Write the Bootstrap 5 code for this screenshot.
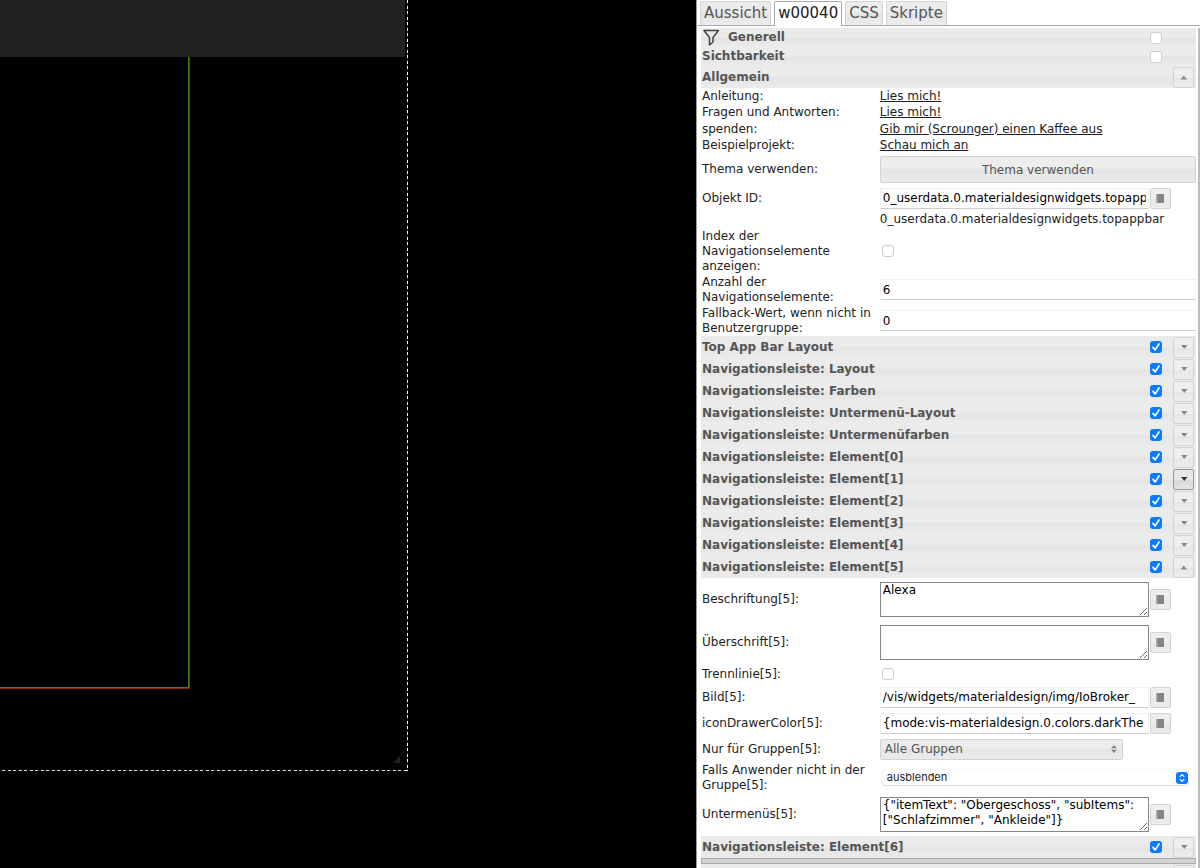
<!DOCTYPE html>
<html lang="de">
<head>
<meta charset="utf-8">
<meta name="viewport" content="width=device-width, initial-scale=1">
<title>ioBroker vis Editor</title>
<link href="https://cdn.jsdelivr.net/npm/bootstrap@5.3.0/dist/css/bootstrap.min.css" rel="stylesheet">
<style>
  body { font: 12px/15px Verdana, "DejaVu Sans", sans-serif; color: #222; background: #000; }
  button, input, select, textarea { font-family: inherit; }

  /* Canvas */
  .canvas-area { background: #000; min-width: 0; }
  .stage { width: 58.6%; height: 771px; padding-right: 3px;
    background:
      repeating-linear-gradient(180deg, #fff 0 3px, #222 3px 6px, #fff 6px 9px, #222 9px 11px) right top / 1px 100% no-repeat,
      repeating-linear-gradient(90deg, #222 0 2px, #ddd 2px 5px, #222 5px 8px, #ddd 8px 11px) left bottom / 100% 1px no-repeat; }
  .topbar { height: 57px; background: #212121; }
  .view-frame { width: 47%; height: 632px; border: solid #8c2400; border-width: 0 1px 1px 0; }
  .view-frame > div { border: solid #4f7c00; border-width: 0 1px 1px 0; }
  .resize-grip { right: 8px; bottom: 8px; }

  /* Property panel */
  .panel { flex: 0 0 42%; min-width: 0; background: #fff; border-left: 1px solid #999; }
  .panel-tabs { height: 26px; padding: 1px 3px 0; gap: 3px; border-bottom: 1px solid #aaa; }
  .panel-tabs .nav-link { height: 24px; padding: 0 3px; font-size: 15px; line-height: 23px; color: #555;
    border: 1px solid #d3d3d3; border-bottom: 0; border-radius: 2px 2px 0 0; background: linear-gradient(#ececec 45%, #e5e5e5 50%, #ececec); }
  .panel-tabs .nav-link.active { height: 25px; color: #212121; background: #fff; border-color: #aaa; }
  .panel-body { margin-top: 2px; padding: 0 2px 0 4px; border-right: 2px solid #bbb; }

  .group-head { height: 22px; padding: 0 2px 0 1px; font-weight: bold; color: #555; background: linear-gradient(#ebebeb 45%, #e4e4e4 55%, #ececec); }
  .group-head.low { height: 19px; }
  .group-head .form-check-input { margin: 0 11px 0 0; }
  .group-head .spacer { width: 21px; }
  .form-check-input { width: 12px; height: 12px; margin: 0; border: 1px solid #ccc; border-radius: 3px; background-color: #fff; }
  .form-check-input:checked { border: 0; background: #0a7aff url("data:image/svg+xml,%3Csvg xmlns='http://www.w3.org/2000/svg' viewBox='0 0 12 12'%3E%3Cpath d='M3 6.400l2.200 2.500L9 3' fill='none' stroke='white' stroke-width='1.700' stroke-linecap='round' stroke-linejoin='round'/%3E%3C/svg%3E") center / 12px no-repeat; }
  .tool { width: 21px; height: 21px; padding: 0; border: 1px solid #d3d3d3; border-radius: 2px; background: linear-gradient(#eee 50%, #e6e6e6 55%, #ededed); color: #888; line-height: 0; }
  .tool.hot { border-color: #999; color: #333; background: linear-gradient(#e6e6e6 50%, #dadada 55%, #e2e2e2); }
  .pick { margin-left: 1px; }

  .prop { display: grid; grid-template-columns: 36% 1fr; align-items: center; padding-left: 1px; }
  .prop > div { min-width: 0; }
  .link-rows { display: grid; grid-auto-rows: 1fr; height: 66px; }
  .h-line { height: 17px; } .h-check { height: 20px; } .h-field { height: 26px; }
  .h-two { height: 31px; } .h-three { height: 46px; } .h-area { height: 43px; }
  .prop a { color: #222; text-underline-offset: 1px; }
  .tick { display: flex; padding-left: 2px; }
  .entry, .area { width: 85%; padding: 0 2px; color: #000; font-size: 12px; line-height: 15px; background: #fff; border-radius: 0; }
  .entry { height: 21px; border: 1px solid #f0f0f0; border-bottom-color: #ccc; }
  .entry.wide { width: 100%; border-right: 0; }
  .area { height: 35px; border: 1px solid #888; resize: vertical; overflow: hidden; }
  .theme-btn { height: 27px; padding: 0; font-size: 12px; color: #555; border: 1px solid #d3d3d3; border-radius: 2px; background: linear-gradient(#ededed 45%, #e5e5e5 50%, #ebebeb); }
  .groups { width: 77%; height: 21px; padding: 0 4px; font-size: 12px; color: #555; appearance: none; border: 1px solid #d3d3d3; border-radius: 2px;
    background: url("data:image/svg+xml,%3Csvg xmlns='http://www.w3.org/2000/svg' width='6' height='8'%3E%3Cpath d='M3 0l3 3.300H0zM3 8L0 4.700h6z' fill='%23888'/%3E%3C/svg%3E") right 5px center no-repeat, linear-gradient(#ececec 45%, #e5e5e5 50%, #ebebeb); }
  .absent { width: 97%; height: 15px; margin-left: 2px; padding: 0 5px; font: 11px/15px Inter, sans-serif; color: #222; appearance: none; border: 0; border-radius: 4px; box-shadow: 0 0 1px #bbb, 0 1px 1px #ddd;
    background: #fff url("data:image/svg+xml,%3Csvg xmlns='http://www.w3.org/2000/svg' width='12' height='12'%3E%3Crect width='12' height='12' rx='3' fill='%230a7aff'/%3E%3Cpath d='M3.700 4.800L6 2.500l2.300 2.300M3.700 7.200L6 9.500l2.300-2.300' fill='none' stroke='white' stroke-width='1.200'/%3E%3C/svg%3E") right 1px center no-repeat; }
  .splitter { height: 6px; background: #d3d3d3; border: 1px solid #aaa; }
</style>
</head>
<body>
<svg class="d-none" xmlns="http://www.w3.org/2000/svg">
  <symbol id="down" viewBox="0 0 8 5"><path d="M1 0h6.500L4.250 4z" fill="currentColor"/></symbol>
  <symbol id="up" viewBox="0 0 8 5"><path d="M.5 4.500h6.500L3.750 .5z" fill="currentColor"/></symbol>
  <symbol id="book" viewBox="0 0 8 9"><path d="M0 0h2v9H0z" fill="#aaa"/><path d="M1.500 0H8v9H1.500z" fill="#858585"/></symbol>
</svg>
<div class="d-flex vh-100 overflow-hidden">
  <main class="canvas-area flex-grow-1">
    <div class="stage position-relative">
      <div class="topbar"></div>
      <div class="view-frame"><div class="h-100"></div></div>
      <svg class="resize-grip position-absolute" width="8" height="8"><path d="M8 1v7H1z" fill="#222"/></svg>
    </div>
  </main>

  <aside class="panel d-flex flex-column">
    <nav class="panel-tabs nav flex-nowrap flex-shrink-0">
      <a class="nav-link" href="#">Aussicht</a>
      <a class="nav-link active" href="#" aria-current="page">w00040</a>
      <a class="nav-link" href="#">CSS</a>
      <a class="nav-link" href="#">Skripte</a>
    </nav>
    <form class="panel-body flex-grow-1 overflow-hidden">
      <div class="group-head low d-flex align-items-center">
        <svg class="me-2" width="18" height="18" viewBox="0 0 18 18" aria-hidden="true"><path d="M2 1.500h14.500L11 8.500V13l-3.500 3V8.500z" fill="none" stroke="#444" stroke-width="1.500" stroke-linejoin="round"/></svg>
        <label class="me-auto" for="g-gen">Generell</label><input class="form-check-input" type="checkbox" id="g-gen"><span class="spacer"></span>
      </div>
      <div class="group-head low d-flex align-items-center"><label class="me-auto" for="g-vis">Sichtbarkeit</label><input class="form-check-input" type="checkbox" id="g-vis"><span class="spacer"></span></div>
      <div class="group-head d-flex align-items-center"><span class="me-auto">Allgemein</span><button class="tool" type="button" aria-expanded="true"><svg width="8" height="5"><use href="#up"/></svg></button></div>

      <div class="link-rows">
        <div class="prop"><span>Anleitung:</span><div><a href="#">Lies mich!</a></div></div>
        <div class="prop"><span>Fragen und Antworten:</span><div><a href="#">Lies mich!</a></div></div>
        <div class="prop"><span>spenden:</span><div><a href="#">Gib mir (Scrounger) einen Kaffee aus</a></div></div>
        <div class="prop"><span>Beispielprojekt:</span><div><a href="#">Schau mich an</a></div></div>
      </div>
      <div class="prop h-two"><span>Thema verwenden:</span><div><button class="theme-btn btn w-100" type="button">Thema verwenden</button></div></div>
      <div class="prop h-field"><label for="oid">Objekt ID:</label><div class="d-flex align-items-center"><input class="entry" id="oid" type="text" value="0_userdata.0.materialdesignwidgets.topappbar"><button class="tool pick" type="button" aria-haspopup="dialog"><svg width="8" height="9"><use href="#book"/></svg></button></div></div>
      <div class="prop h-line"><span></span><div>0_userdata.0.materialdesignwidgets.topappbar</div></div>
      <div class="prop h-three"><label for="idx">Index der<br>Navigationselemente<br>anzeigen:</label><div class="tick"><input class="form-check-input" id="idx" type="checkbox"></div></div>
      <div class="prop h-two"><label for="cnt">Anzahl der<br>Navigationselemente:</label><div><input class="entry wide" id="cnt" type="text" value="6"></div></div>
      <div class="prop h-two"><label for="fb">Fallback-Wert, wenn nicht in<br>Benutzergruppe:</label><div><input class="entry wide" id="fb" type="text" value="0"></div></div>

      <div class="group-head d-flex align-items-center"><label class="me-auto" for="g1">Top App Bar Layout</label><input class="form-check-input" type="checkbox" id="g1" checked><button class="tool" type="button"><svg width="8" height="5"><use href="#down"/></svg></button></div>
      <div class="group-head d-flex align-items-center"><label class="me-auto" for="g2">Navigationsleiste: Layout</label><input class="form-check-input" type="checkbox" id="g2" checked><button class="tool" type="button"><svg width="8" height="5"><use href="#down"/></svg></button></div>
      <div class="group-head d-flex align-items-center"><label class="me-auto" for="g3">Navigationsleiste: Farben</label><input class="form-check-input" type="checkbox" id="g3" checked><button class="tool" type="button"><svg width="8" height="5"><use href="#down"/></svg></button></div>
      <div class="group-head d-flex align-items-center"><label class="me-auto" for="g4">Navigationsleiste: Untermenü-Layout</label><input class="form-check-input" type="checkbox" id="g4" checked><button class="tool" type="button"><svg width="8" height="5"><use href="#down"/></svg></button></div>
      <div class="group-head d-flex align-items-center"><label class="me-auto" for="g5">Navigationsleiste: Untermenüfarben</label><input class="form-check-input" type="checkbox" id="g5" checked><button class="tool" type="button"><svg width="8" height="5"><use href="#down"/></svg></button></div>
      <div class="group-head d-flex align-items-center"><label class="me-auto" for="e0">Navigationsleiste: Element[0]</label><input class="form-check-input" type="checkbox" id="e0" checked><button class="tool" type="button"><svg width="8" height="5"><use href="#down"/></svg></button></div>
      <div class="group-head d-flex align-items-center"><label class="me-auto" for="e1">Navigationsleiste: Element[1]</label><input class="form-check-input" type="checkbox" id="e1" checked><button class="tool hot" type="button"><svg width="8" height="5"><use href="#down"/></svg></button></div>
      <div class="group-head d-flex align-items-center"><label class="me-auto" for="e2">Navigationsleiste: Element[2]</label><input class="form-check-input" type="checkbox" id="e2" checked><button class="tool" type="button"><svg width="8" height="5"><use href="#down"/></svg></button></div>
      <div class="group-head d-flex align-items-center"><label class="me-auto" for="e3">Navigationsleiste: Element[3]</label><input class="form-check-input" type="checkbox" id="e3" checked><button class="tool" type="button"><svg width="8" height="5"><use href="#down"/></svg></button></div>
      <div class="group-head d-flex align-items-center"><label class="me-auto" for="e4">Navigationsleiste: Element[4]</label><input class="form-check-input" type="checkbox" id="e4" checked><button class="tool" type="button"><svg width="8" height="5"><use href="#down"/></svg></button></div>
      <div class="group-head d-flex align-items-center"><label class="me-auto" for="e5">Navigationsleiste: Element[5]</label><input class="form-check-input" type="checkbox" id="e5" checked><button class="tool" type="button" aria-expanded="true"><svg width="8" height="5"><use href="#up"/></svg></button></div>

      <div class="prop h-area"><label for="t5">Beschriftung[5]:</label><div class="d-flex align-items-center"><textarea class="area" id="t5">Alexa</textarea><button class="tool pick" type="button"><svg width="8" height="9"><use href="#book"/></svg></button></div></div>
      <div class="prop h-area"><label for="u5">Überschrift[5]:</label><div class="d-flex align-items-center"><textarea class="area" id="u5"></textarea><button class="tool pick" type="button"><svg width="8" height="9"><use href="#book"/></svg></button></div></div>
      <div class="prop h-check"><label for="d5">Trennlinie[5]:</label><div class="tick"><input class="form-check-input" id="d5" type="checkbox"></div></div>
      <div class="prop h-field"><label for="b5">Bild[5]:</label><div class="d-flex align-items-center"><input class="entry" id="b5" type="text" value="/vis/widgets/materialdesign/img/IoBroker_"><button class="tool pick" type="button"><svg width="8" height="9"><use href="#book"/></svg></button></div></div>
      <div class="prop h-field"><label for="c5">iconDrawerColor[5]:</label><div class="d-flex align-items-center"><input class="entry" id="c5" type="text" value="{mode:vis-materialdesign.0.colors.darkThe"><button class="tool pick" type="button"><svg width="8" height="9"><use href="#book"/></svg></button></div></div>
      <div class="prop h-field"><label for="n5">Nur für Gruppen[5]:</label><div class="d-flex"><select class="groups" id="n5"><option>Alle Gruppen</option></select></div></div>
      <div class="prop h-two"><label for="f5">Falls Anwender nicht in der<br>Gruppe[5]:</label><div class="d-flex"><select class="absent" id="f5"><option>ausblenden</option></select></div></div>
      <div class="prop h-area"><label for="s5">Untermenüs[5]:</label><div class="d-flex align-items-center"><textarea class="area" id="s5">{"itemText": "Obergeschoss", "subItems": ["Schlafzimmer", "Ankleide"]}</textarea><button class="tool pick" type="button"><svg width="8" height="9"><use href="#book"/></svg></button></div></div>

      <div class="group-head d-flex align-items-center"><label class="me-auto" for="e6">Navigationsleiste: Element[6]</label><input class="form-check-input" type="checkbox" id="e6" checked><button class="tool" type="button"><svg width="8" height="5"><use href="#down"/></svg></button></div>
      <div class="splitter"></div>
      <div class="group-head d-flex align-items-center justify-content-end"><button class="tool" type="button" aria-label="Element[7]"></button></div>
    </form>
  </aside>
</div>
<script src="https://cdn.jsdelivr.net/npm/bootstrap@5.3.0/dist/js/bootstrap.bundle.min.js"></script>
</body>
</html>
